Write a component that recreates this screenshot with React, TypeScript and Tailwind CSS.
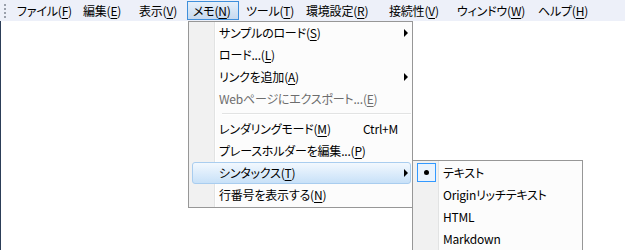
import React from "react";

type MI = { t: string; k: string; suffix?: string };

function Mn({ t, k, suffix }: MI) {
  return (
    <span className="whitespace-nowrap">
      {t}
      {suffix}(<span className="underline underline-offset-[2px] decoration-[1px]">{k}</span>)
    </span>
  );
}

function Arrow() {
  return (
    <span className="absolute right-[2px] top-1/2 -translate-y-1/2 w-0 h-0 border-y-[4px] border-y-transparent border-l-[4px] border-l-black" />
  );
}

type Row = {
  t: string;
  k: string;
  suffix?: string;
  arrow?: boolean;
  shortcut?: string;
  disabled?: boolean;
  hi?: boolean;
};

function DropRow({ r }: { r: Row }) {
  return (
    <div
      className={
        "relative ml-[3px] mr-[1px] h-[22px] flex items-center pl-[26px] rounded-[3px] border " +
        (r.hi
          ? "border-[#a9cdef] bg-gradient-to-b from-[#f2f8fe] to-[#c8e1f8]"
          : "border-transparent")
      }
    >
      <span
        className={
          "w-[144px] shrink-0 " + (r.disabled ? "text-[#6d6d6d]" : "text-black")
        }
      >
        <Mn t={r.t} k={r.k} suffix={r.suffix} />
      </span>
      {r.shortcut && <span className="text-black">{r.shortcut}</span>}
      {r.arrow && <Arrow />}
    </div>
  );
}

export default function App() {
  const bar: { t: string; k: string; w: string; hi?: boolean }[] = [
    { t: "ファイル", k: "F", w: "w-[66px]" },
    { t: "編集", k: "E", w: "w-[56px]" },
    { t: "表示", k: "V", w: "w-[54px]" },
    { t: "メモ", k: "N", w: "w-[53px]", hi: true },
    { t: "ツール", k: "T", w: "w-[60px]" },
    { t: "環境設定", k: "R", w: "w-[83px]" },
    { t: "接続性", k: "V", w: "w-[68px]" },
    { t: "ウィンドウ", k: "W", w: "w-[81px]" },
    { t: "ヘルプ", k: "H", w: "w-[60px]" },
  ];

  const top: Row[] = [
    { t: "サンプルのロード", k: "S", arrow: true },
    { t: "ロード", suffix: "...", k: "L" },
    { t: "リンクを追加", k: "A", arrow: true },
    { t: "Webページにエクスポート", suffix: "...", k: "E", disabled: true },
  ];
  const bottom: Row[] = [
    { t: "レンダリングモード", k: "M", shortcut: "Ctrl+M" },
    { t: "プレースホルダーを編集", suffix: "...", k: "P" },
    { t: "シンタックス", k: "T", arrow: true, hi: true },
    { t: "行番号を表示する", k: "N" },
  ];
  const sub = ["テキスト", "Originリッチテキスト", "HTML", "Markdown"];

  return (
    <div className="relative w-[625px] h-[250px] overflow-hidden bg-white font-['Noto_Sans_CJK_JP','Noto_Sans',sans-serif] text-[12px] leading-none [font-feature-settings:'palt'] tracking-[-0.2px] text-black">
      {/* menu bar */}
      <div className="flex h-[21px] items-center bg-[#edf0f9]">
        <div className="w-[11px] h-full flex flex-col items-start pl-[4px] pt-[4px] gap-[2px]">
          <span className="w-[2px] h-[2px] bg-[#9aa0ab]" />
          <span className="w-[2px] h-[2px] bg-[#9aa0ab]" />
          <span className="w-[2px] h-[2px] bg-[#9aa0ab]" />
          <span className="w-[2px] h-[2px] bg-[#9aa0ab]" />
        </div>
        {bar.map((b, i) => (
          <div key={i} className={b.w + " shrink-0 h-full flex items-center"}>
            <div
              className={
                "h-[19px] flex items-center px-[5px] border " +
                (b.hi
                  ? "w-[52px] border-[#3f8fdb] bg-gradient-to-b from-[#e6f0fa] to-[#c7daef]"
                  : "border-transparent")
              }
            >
              <Mn t={b.t} k={b.k} />
            </div>
          </div>
        ))}
      </div>

      {/* window left edge */}
      <div className="absolute left-0 top-[21px] bottom-0 w-[1px] bg-[#2c3e58]" />

      {/* dropdown */}
      <div className="absolute left-[188px] top-[21px] w-[225px] border border-[#979797] bg-[#fcfcfc] pb-[1px]">
        <div className="absolute left-0 top-0 bottom-0 w-[26px] bg-[#f1f1f1] border-r border-r-[#e2e3e3]" />
        <div className="absolute left-[26px] top-0 bottom-0 w-[1px] bg-white" />
        <div className="relative">
          {top.map((r, i) => (
            <DropRow key={i} r={r} />
          ))}
          <div className="h-[8px] pt-[3px] ml-[33px] mr-[1px]">
            <div className="h-[1px] bg-[#e2e3e3]" />
            <div className="h-[1px] bg-white" />
          </div>
          {bottom.map((r, i) => (
            <DropRow key={i} r={r} />
          ))}
        </div>
      </div>

      {/* submenu */}
      <div className="absolute left-[412px] top-[160px] w-[171px] h-[120px] border border-[#979797] bg-[#fcfcfc] pt-[1px]">
        <div className="absolute left-0 top-0 bottom-0 w-[26px] bg-[#f1f1f1] border-r border-r-[#e2e3e3]" />
        <div className="relative">
          {sub.map((s, i) => (
            <div key={i} className="relative h-[22px] flex items-center pl-[30px]">
              {i === 0 && (
                <span className="absolute left-[4px] top-[1px] w-[19px] h-[19px] border border-[#3399ff] bg-[#eaf3fd] flex items-center justify-center">
                  <span className="w-[5px] h-[5px] rounded-full bg-black" />
                </span>
              )}
              <span>{s}</span>
            </div>
          ))}
        </div>
      </div>
    </div>
  );
}
